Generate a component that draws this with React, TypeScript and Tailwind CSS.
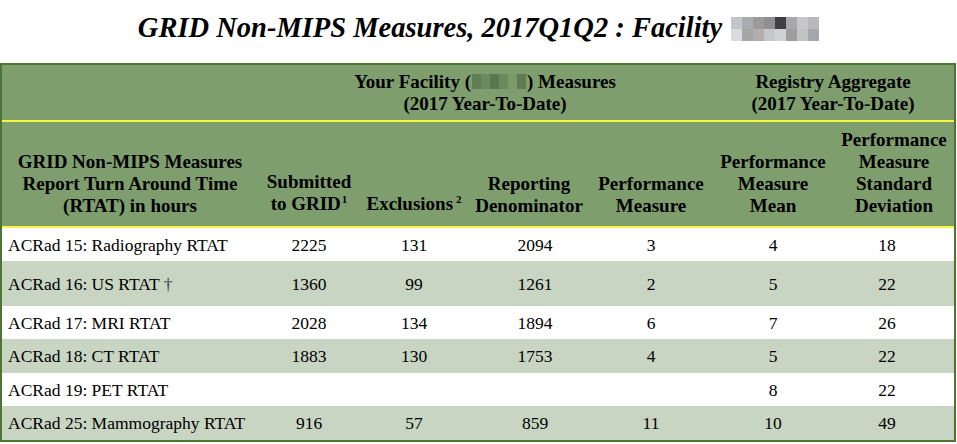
import React from "react";

const rows = [
  { name: "ACRad 15: Radiography RTAT", v: ["2225", "131", "2094", "3", "4", "18"], h: "h-[33px]" },
  { name: "ACRad 16: US RTAT †", v: ["1360", "99", "1261", "2", "5", "22"], h: "h-[45px]" },
  { name: "ACRad 17: MRI RTAT", v: ["2028", "134", "1894", "6", "7", "26"], h: "h-[33px]" },
  { name: "ACRad 18: CT RTAT", v: ["1883", "130", "1753", "4", "5", "22"], h: "h-[34px]" },
  { name: "ACRad 19: PET RTAT", v: ["", "", "", "", "8", "22"], h: "h-[33px]" },
  { name: "ACRad 25: Mammography RTAT", v: ["916", "57", "859", "11", "10", "49"], h: "h-[34px]" },
];

const titleBlur = [
  ["#c2c6cb", "#a9adb2", "#9b9a9a", "#8f8f8f", "#3f3f42", "#a8a8aa", "#c7c7c9", "#b9b9bb"],
  ["#d9dbe0", "#a6a6a6", "#b3aeab", "#c7c7c9", "#d0d2d5", "#9e9e9e", "#c3c3c3", "#a5a7aa"],
];

const facBlur = ["#5f7c53", "#6c8a5f", "#587750", "#6a8a5e", "#7a9a6c", "#5e7b52"];

const dataPad = ["", "", "pl-[12px]", "", "", "pr-[14px]"];

export default function App() {
  return (
    <div className="w-[957px] h-[444px] bg-white overflow-hidden font-['Liberation_Serif',serif]">
      <div className="h-[63px] flex items-center justify-center pb-[6px]">
        <span className="text-[28.5px] font-bold italic text-black leading-none font-['Liberation_Serif',serif]">
          GRID Non-MIPS Measures, 2017Q1Q2 : Facility
        </span>
        <span className="ml-[9px] flex flex-col">
          {titleBlur.map((r, i) => (
            <span key={i} className="flex">
              {r.map((c, j) => (
                <span key={j} className="w-[11px] h-[12px]" style={{ background: c }} />
              ))}
            </span>
          ))}
        </span>
      </div>
      <div className="w-[956px] border-2 border-[#4b7531]">
        <table className="w-[952px] table-fixed border-separate border-spacing-0 text-black font-['Liberation_Serif',serif]">
          <colgroup>
            <col className="w-[256px]" />
            <col className="w-[102px]" />
            <col className="w-[108px]" />
            <col className="w-[122px]" />
            <col className="w-[122px]" />
            <col className="w-[122px]" />
            <col className="w-[120px]" />
          </colgroup>
          <thead className="text-[19px] font-bold leading-[22px] bg-[#7e9e6e]">
            <tr className="h-[57px]">
              <th className="border-b-2 border-[#f7f53f] p-0" />
              <th colSpan={4} className="border-b-2 border-[#f7f53f] p-0 align-middle text-center font-bold">
                <div className="flex items-center justify-center">
                  Your Facility (
                  <span className="inline-flex h-[15px] mx-[1px]">
                    {facBlur.map((c, i) => (
                      <span key={i} className="w-[9px] h-[15px]" style={{ background: c }} />
                    ))}
                  </span>
                  ) Measures
                </div>
                <div>(2017 Year-To-Date)</div>
              </th>
              <th colSpan={2} className="border-b-2 border-[#f7f53f] p-0 align-middle text-center font-bold">
                <div>Registry Aggregate</div>
                <div>(2017 Year-To-Date)</div>
              </th>
            </tr>
            <tr className="h-[106px]">
              <th className="border-b-2 border-[#f7f53f] px-0 pb-[9px] align-bottom text-center font-bold">
                GRID Non-MIPS Measures<br />Report Turn Around Time<br />(RTAT) in hours
              </th>
              <th className="border-b-2 border-[#f7f53f] px-0 pb-[9px] align-bottom text-center font-bold">
                Submitted<br />to GRID<span className="text-[11px] font-bold relative -top-[7px] ml-[1px]">1</span>
              </th>
              <th className="border-b-2 border-[#f7f53f] px-0 pb-[9px] align-bottom text-center font-bold">
                Exclusions<span className="text-[11px] font-bold ml-[3px] relative -top-[7px]">2</span>
              </th>
              <th className="border-b-2 border-[#f7f53f] px-0 pb-[9px] align-bottom text-center font-bold">
                Reporting<br />Denominator
              </th>
              <th className="border-b-2 border-[#f7f53f] px-0 pb-[9px] align-bottom text-center font-bold">
                Performance<br />Measure
              </th>
              <th className="border-b-2 border-[#f7f53f] px-0 pb-[9px] align-bottom text-center font-bold">
                Performance<br />Measure<br />Mean
              </th>
              <th className="border-b-2 border-[#f7f53f] px-0 pb-[9px] align-bottom text-center font-bold">
                Performance<br />Measure<br />Standard<br />Deviation
              </th>
            </tr>
          </thead>
          <tbody className="text-[17.5px] leading-[22px]">
            {rows.map((r, i) => (
              <tr key={i} className={`${r.h} ${i % 2 === 1 ? "bg-[#c7d5c2]" : "bg-white"}`}>
                <td className="pl-[6px] pr-0 py-0 align-middle text-left whitespace-nowrap">
                  {r.name.endsWith("†") ? (
                    <>
                      {r.name.slice(0, -1)}
                      <span className="text-[#2f3e4a]">†</span>
                    </>
                  ) : (
                    r.name
                  )}
                </td>
                {r.v.map((v, j) => (
                  <td key={j} className={`p-0 align-middle text-center ${dataPad[j]}`}>
                    {v}
                  </td>
                ))}
              </tr>
            ))}
          </tbody>
        </table>
      </div>
    </div>
  );
}
